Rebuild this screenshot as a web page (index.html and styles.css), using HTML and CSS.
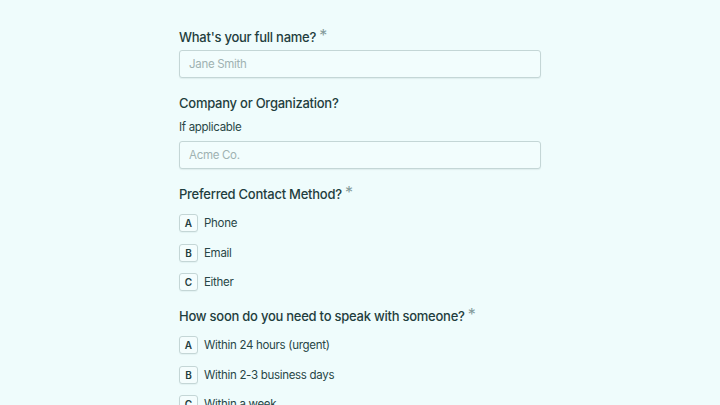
FILE: index.html
```html
<!DOCTYPE html>
<html>
<head>
<meta charset="utf-8">
<link rel="stylesheet" href="styles.css">
</head>
<body>
<main class="form">
  <section class="field">
    <label class="label">What's your full name? <span class="req">*</span></label>
    <div class="input">Jane Smith</div>
  </section>
  <section class="field">
    <label class="label">Company or Organization?</label>
    <div class="help">If applicable</div>
    <div class="input">Acme Co.</div>
  </section>
  <section class="field">
    <label class="label">Preferred Contact Method? <span class="req">*</span></label>
    <div class="options">
      <div class="opt"><span class="key">A</span><span class="otext">Phone</span></div>
      <div class="opt"><span class="key">B</span><span class="otext">Email</span></div>
      <div class="opt"><span class="key">C</span><span class="otext">Either</span></div>
    </div>
  </section>
  <section class="field">
    <label class="label">How soon do you need to speak with someone? <span class="req">*</span></label>
    <div class="options">
      <div class="opt"><span class="key">A</span><span class="otext">Within 24 hours (urgent)</span></div>
      <div class="opt"><span class="key">B</span><span class="otext">Within 2-3 business days</span></div>
      <div class="opt"><span class="key">C</span><span class="otext">Within a week</span></div>
    </div>
  </section>
</main>
</body>
</html>
```
FILE: styles.css
```css
html, body { margin: 0; padding: 0; }
body {
  background: #effcfc;
  font-family: Inter, "Noto Sans", sans-serif;
  color: #1e3d3d;
  height: 405px;
  overflow: hidden;
}
.form {
  width: 362px;
  margin: 0 auto;
  padding-top: 27px;
  display: flex;
  flex-direction: column;
  gap: 15px;
}
.field { display: flex; flex-direction: column; }
.label {
  font-size: 13px;
  font-weight: 500;
  line-height: 20px;
  letter-spacing: -0.25px;
  margin-bottom: 3px;
  color: #1f3e3e;
}
.req {
  color: #849b9b;
  font-size: 16px;
  font-weight: 400;
  vertical-align: 1px;
  line-height: 0;
  margin-left: 0;
}
.help {
  font-size: 11.5px;
  line-height: 22px;
  letter-spacing: -0.3px;
  margin-bottom: 3px;
  color: #2a4747;
}
.input {
  box-sizing: border-box;
  height: 28px;
  border: 1px solid #c4d6d6;
  border-radius: 3px;
  padding: 0 9px;
  font-size: 11.5px;
  letter-spacing: -0.3px;
  line-height: 26px;
  color: #9fb2b2;
  background: #f2fdfd;
  box-shadow: 0 1px 1px rgba(40, 80, 80, 0.08);
}
.options {
  display: flex;
  flex-direction: column;
  gap: 11.5px;
  margin-top: 7px;
}
.opt { display: flex; align-items: center; gap: 6px; }
.key {
  box-sizing: border-box;
  width: 19px;
  height: 18px;
  border: 1px solid #c4d6d6;
  border-radius: 3px;
  display: flex;
  align-items: center;
  justify-content: center;
  font-size: 10px;
  font-weight: 600;
  color: #1f3e3e;
  background: #f4fdfd;
  box-shadow: 0 1px 1px rgba(40, 80, 80, 0.06);
}
.otext {
  font-size: 11.5px;
  line-height: 18px;
  letter-spacing: -0.3px;
  color: #284646;
}
```
